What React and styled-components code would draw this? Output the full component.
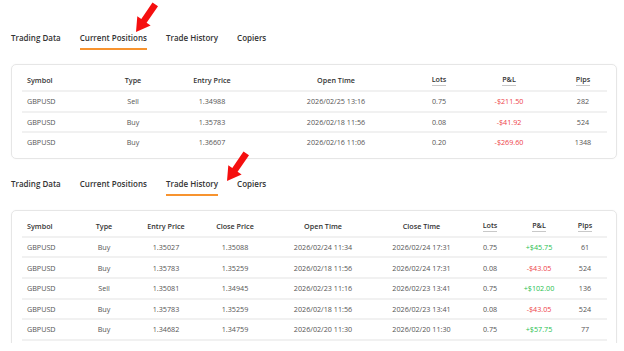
import React from 'react'
import styled, { createGlobalStyle } from 'styled-components'

const GlobalStyle = createGlobalStyle`
  body {
    margin: 0;
    background: #fff;
    font-family: "Open Sans", "Noto Sans", sans-serif;
  }
`

const tabs = ['Trading Data', 'Current Positions', 'Trade History', 'Copiers']

const positionCols = [
  { label: 'Symbol', width: 73, align: 'left' },
  { label: 'Type', width: 76 },
  { label: 'Entry Price', width: 82 },
  { label: 'Open Time', width: 166 },
  { label: 'Lots', width: 40, mark: true },
  { label: 'P&L', width: 100, mark: true },
  { label: 'Pips', width: 48, mark: true },
]

const positions = [
  ['GBPUSD', 'Sell', '1.34988', '2026/02/25 13:16', '0.75', '-$211.50', '282'],
  ['GBPUSD', 'Buy', '1.35783', '2026/02/18 11:56', '0.08', '-$41.92', '524'],
  ['GBPUSD', 'Buy', '1.36607', '2026/02/16 11:06', '0.20', '-$269.60', '1348'],
]

const historyCols = [
  { label: 'Symbol', width: 56, align: 'left' },
  { label: 'Type', width: 52 },
  { label: 'Entry Price', width: 72 },
  { label: 'Close Price', width: 66 },
  { label: 'Open Time', width: 110 },
  { label: 'Close Time', width: 87 },
  { label: 'Lots', width: 50, mark: true },
  { label: 'P&L', width: 48, mark: true },
  { label: 'Pips', width: 44, mark: true },
]

const history = [
  ['GBPUSD', 'Buy', '1.35027', '1.35088', '2026/02/24 11:34', '2026/02/24 17:31', '0.75', '+$45.75', '61'],
  ['GBPUSD', 'Buy', '1.35783', '1.35259', '2026/02/18 11:56', '2026/02/24 17:31', '0.08', '-$43.05', '524'],
  ['GBPUSD', 'Sell', '1.35081', '1.34945', '2026/02/23 11:16', '2026/02/23 13:41', '0.75', '+$102.00', '136'],
  ['GBPUSD', 'Buy', '1.35783', '1.35259', '2026/02/18 11:56', '2026/02/23 13:41', '0.08', '-$43.05', '524'],
  ['GBPUSD', 'Buy', '1.34682', '1.34759', '2026/02/20 11:30', '2026/02/20 11:30', '0.75', '+$57.75', '77'],
]

const pnlTone = (v) => (v.startsWith('+') ? 'up' : v.startsWith('-') ? 'down' : null)

const Arrow = ({ left, top }) => (
  <ArrowSvg $left={left} $top={top} width="26" height="32" viewBox="0 0 26 32">
    <polygon
      fill="#f50f0f"
      points="17.5,0.5 23,4.3 11.6,20.8 15.6,23.6 1,30 2.3,14.3 6.3,17.1"
    />
  </ArrowSvg>
)

const DataTable = ({ cols, rows, open }) => (
  <Table $open={open}>
    <colgroup>
      {cols.map((c) => (
        <col key={c.label} style={{ width: c.width }} />
      ))}
    </colgroup>
    <thead>
      <tr>
        {cols.map((c) => (
          <Th key={c.label} $align={c.align}>
            {c.mark ? <Marked>{c.label}</Marked> : c.label}
          </Th>
        ))}
      </tr>
    </thead>
    <tbody>
      {rows.map((r, i) => (
        <tr key={i}>
          {r.map((v, j) => (
            <Td
              key={j}
              $align={cols[j].align}
              $tone={cols[j].label === 'P&L' ? pnlTone(v) : null}
            >
              {v}
            </Td>
          ))}
        </tr>
      ))}
    </tbody>
  </Table>
)

const Block = ({ active, cols, rows, arrow, gap, open }) => (
  <Section $gap={gap}>
    <Tabs>
      {tabs.map((t) => (
        <Tab key={t} $active={t === active}>
          {t}
        </Tab>
      ))}
    </Tabs>
    <Card $open={open}>
      <DataTable cols={cols} rows={rows} open={open} />
    </Card>
    <Arrow left={arrow.left} top={arrow.top} />
  </Section>
)

const App = () => (
  <Page>
    <GlobalStyle />
    <Block
      gap={32}
      active="Current Positions"
      cols={positionCols}
      rows={positions}
      arrow={{ left: 124, top: 2 }}
    />
    <Block
      gap={19}
      open
      active="Trade History"
      cols={historyCols}
      rows={history}
      arrow={{ left: 215, top: -8 }}
    />
  </Page>
)

const Page = styled.div`
  height: 343px;
  overflow: hidden;
  padding: 0 7px 0 11px;
  box-sizing: border-box;
  width: 624px;
`

const Section = styled.section`
  position: relative;
  padding-top: ${(p) => p.$gap}px;
`

const Tabs = styled.nav`
  display: flex;
  gap: 19px;
  margin-bottom: 14px;
`

const Tab = styled.div`
  font-size: 8px;
  line-height: 11px;
  font-weight: 600;
  color: #333;
  padding-bottom: 5px;
  border-bottom: 2px solid ${(p) => (p.$active ? '#f7932f' : 'transparent')};
`

const ArrowSvg = styled.svg`
  position: absolute;
  left: ${(p) => p.$left}px;
  top: ${(p) => p.$top}px;
`

const Card = styled.div`
  border: 1px solid #e6e6e6;
  border-radius: 5px;
  padding: 5px 10px ${(p) => (p.$open ? '20px' : '6px')} 10px;
  box-shadow: 0 0 2px rgba(0, 0, 0, 0.04);
`

const Table = styled.table`
  width: 100%;
  table-layout: fixed;
  border-collapse: collapse;

  tbody tr td {
    border-top: 2px solid #f1f1f1;
  }

  tbody tr:last-child td {
    border-bottom: ${(p) => (p.$open ? '2px solid #f1f1f1' : 'none')};
  }
`

const Th = styled.th`
  font-size: 7.2px;
  line-height: 10px;
  font-weight: 600;
  color: #333;
  height: 20px;
  padding: 0 5px;
  text-align: ${(p) => p.$align || 'center'};
  white-space: nowrap;
`

const Marked = styled.span`
  display: inline-block;
  border-bottom: 1px solid #c8c8c8;
  padding-bottom: 1px;
  line-height: 9px;
`

const Td = styled.td`
  font-size: 7.2px;
  line-height: 10px;
  height: 18.6px;
  padding: 0 5px;
  text-align: ${(p) => p.$align || 'center'};
  white-space: nowrap;
  color: ${(p) =>
    p.$tone === 'up' ? '#27c04f' : p.$tone === 'down' ? '#ee3f4a' : '#555'};
`

export default App
